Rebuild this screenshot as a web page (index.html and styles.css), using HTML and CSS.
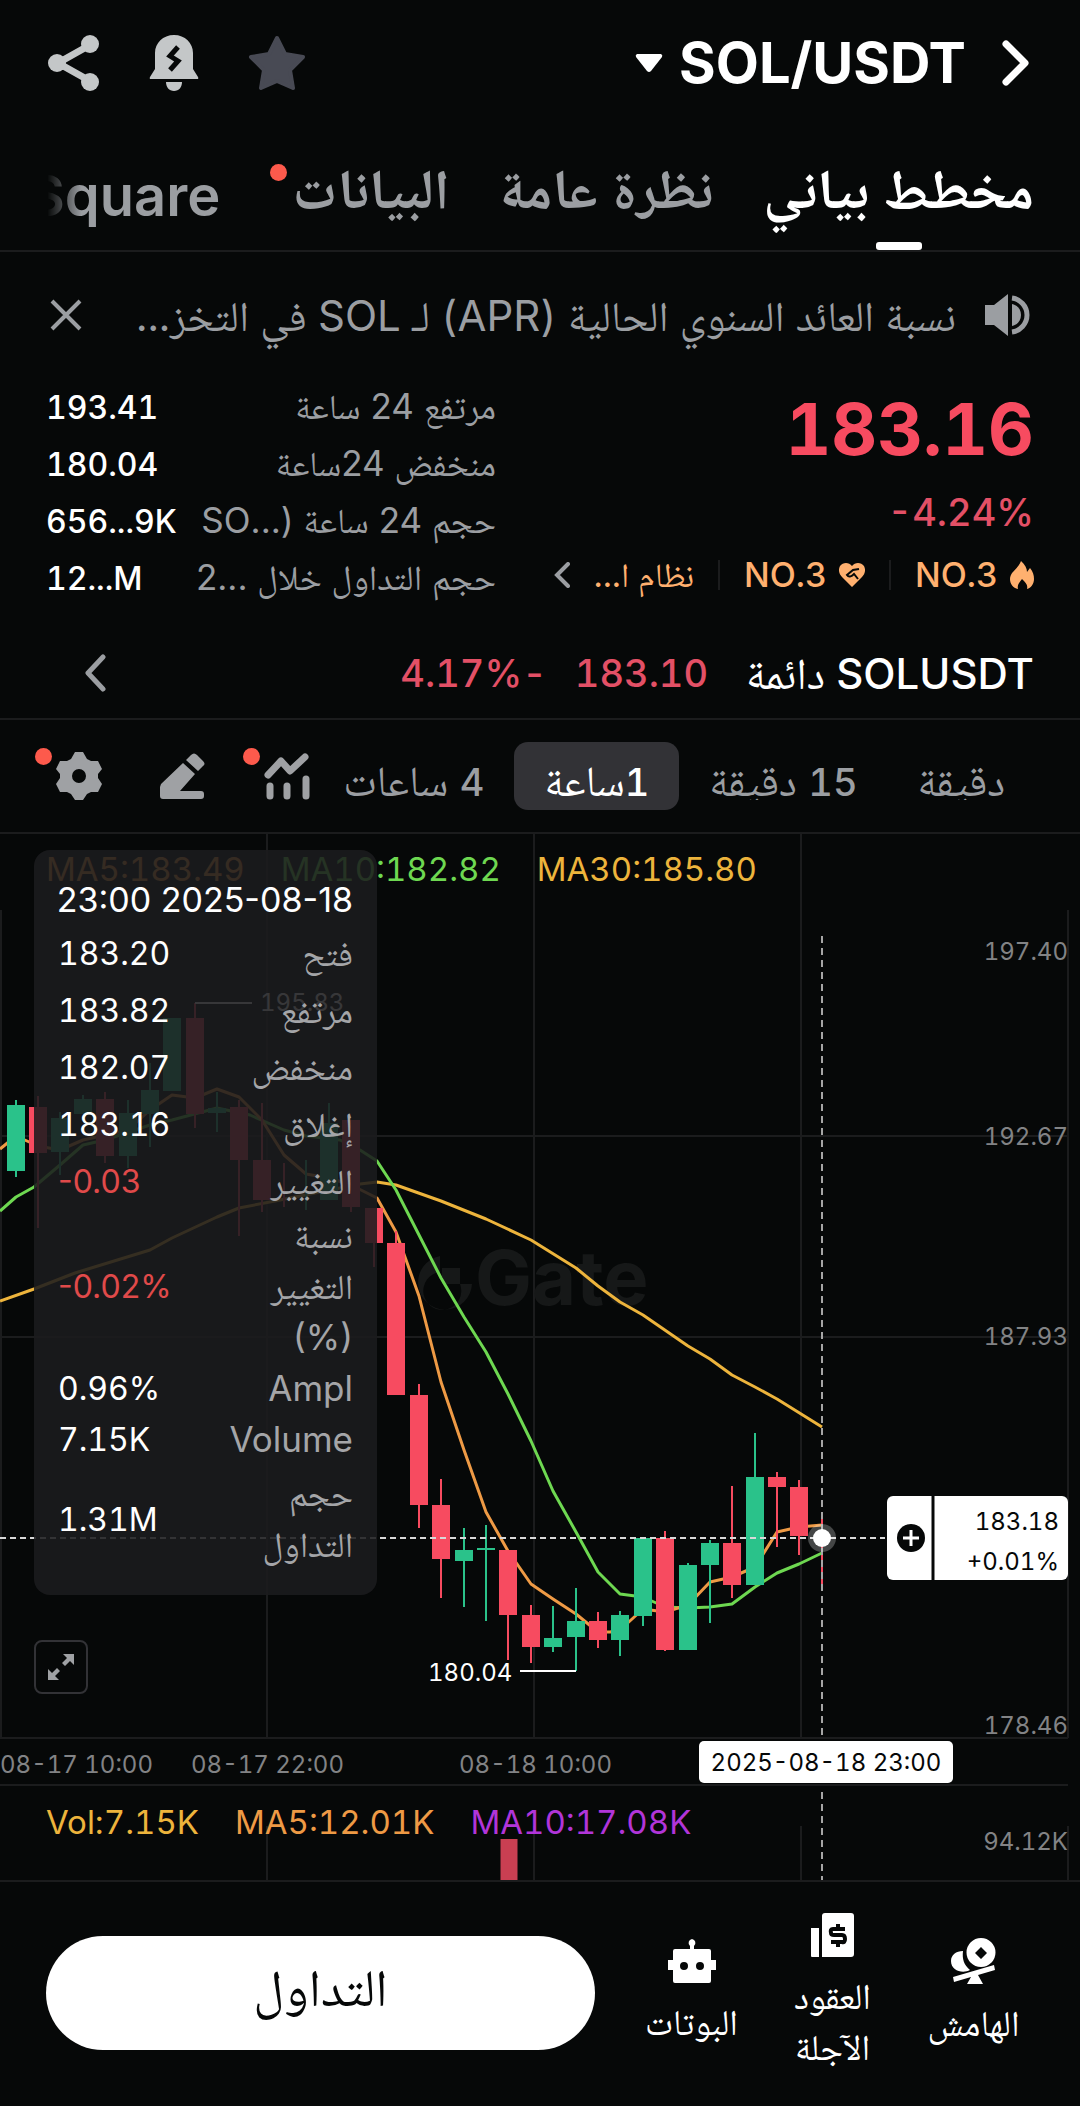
FILE: index.html
```html
<!DOCTYPE html>
<html lang="ar" dir="rtl">
<head>
    <meta charset="UTF-8">
    <meta name="viewport" content="width=device-width, initial-scale=1.0">
    <title>SOL/USDT</title>
    <link rel="stylesheet" href="styles.css">
</head>
<body>

    <header class="topbar">
        <button class="icon-btn" aria-label="رجوع">
            <svg width="28" height="46" viewBox="0 0 28 46"><path d="M4 4l19 19L4 42" fill="none" stroke="#fff" stroke-width="7" stroke-linecap="round" stroke-linejoin="round"/></svg>
        </button>
        <button class="pair">
            <span>SOL/USDT</span>
            <svg width="28" height="20" viewBox="0 0 28 20"><path d="M2 1h24q2 1 1 3L16 18q-2 2-4 0L1 4q-1-2 1-3z" fill="#fff"/></svg>
        </button>
        <div class="topbar-actions">
            <button class="icon-btn" aria-label="المفضلة">
                <svg width="58" height="56" viewBox="0 0 58 56"><path d="M29 3l8 16 18 3-13 13 3 18-16-7-16 7 3-18L3 22l18-3z" fill="#484a54" stroke="#484a54" stroke-width="4" stroke-linejoin="round"/></svg>
            </button>
            <button class="icon-btn" aria-label="تنبيه">
                <svg width="50" height="56" viewBox="0 0 50 56"><path d="M25 0c11 0 19 8 19 18v16l5 8q1 2-1 2H2q-2 0-1-2l5-8V18C6 8 14 0 25 0z" fill="#c4c7c8"/><path d="M17 47h16c0 5-3 9-8 9s-8-4-8-9z" fill="#c4c7c8"/><path d="M29 12l-8 9 8 5-8 9" fill="none" stroke="#060808" stroke-width="5"/></svg>
            </button>
            <button class="icon-btn" aria-label="مشاركة">
                <svg width="52" height="56" viewBox="0 0 52 56"><path d="M42 10L10 28l32 18" fill="none" stroke="#c4c7c8" stroke-width="7"/><g fill="#c4c7c8"><circle cx="42" cy="9" r="9"/><circle cx="9" cy="28" r="9"/><circle cx="42" cy="47" r="9"/></g></svg>
            </button>
        </div>
    </header>

    <nav class="tabs">
        <a href="#" class="tab active">مخطط بياني</a>
        <a href="#" class="tab">نظرة عامة</a>
        <a href="#" class="tab has-dot">البيانات</a>
        <a href="#" class="tab latin">Square</a>
    </nav>

    <div class="notice">
        <svg width="48" height="42" viewBox="0 0 48 42" fill="#9b9ea2"><path d="M1 11h9L24 0v42L10 31H1z"/><path d="M28 10c5 1 9 5 9 11s-4 10-9 11z"/><path d="M28 4c8 1 15 8 15 17s-7 16-15 17" fill="none" stroke="#9b9ea2" stroke-width="5"/></svg>
        <p>نسبة العائد السنوي الحالية (APR) لـ SOL في التخز...</p>
        <button class="icon-btn" aria-label="إغلاق">
            <svg width="32" height="32" viewBox="0 0 32 32"><path d="M2 2l28 28M30 2L2 30" stroke="#9b9ea2" stroke-width="4"/></svg>
        </button>
    </div>

    <section class="summary">
        <div class="quote">
            <div class="price">183.16</div>
            <div class="change" dir="ltr">-4.24%</div>
            <div class="tags">
                <a href="#" class="tag">
                    <svg width="24" height="28" viewBox="0 0 24 28"><path d="M11 0c4 4 6 7 6 11l3-4c3 4 4 7 4 11 0 5-3 9-7 10 1-4-1-6-5-10-3 4-5 6-4 10-5-1-8-5-8-10C0 11 8 8 11 0z" fill="#ffb06f"/></svg>
                    <span>NO.3</span>
                </a>
                <a href="#" class="tag">
                    <svg width="26" height="24" viewBox="0 0 26 24"><path d="M13 3c3-4 9-4 12 0 2 4 1 8-2 11l-10 10L3 14C0 11-1 7 1 3c3-4 9-4 12 0z" fill="#ffb06f"/><path d="M20 6l-6 1-6 5c2 3 5 1 7-1l4 5" fill="none" stroke="#060808" stroke-width="2"/></svg>
                    <span>NO.3</span>
                </a>
                <a href="#" class="tag tag-ar">نظام ا...</a>
                <svg width="16" height="26" viewBox="0 0 16 26"><path d="M14 2L3 13l11 11" fill="none" stroke="#9b9ea2" stroke-width="4" stroke-linecap="round"/></svg>
            </div>
        </div>
        <dl class="stats">
            <div><dt>مرتفع 24 ساعة</dt><dd>193.41</dd></div>
            <div><dt>منخفض 24ساعة</dt><dd>180.04</dd></div>
            <div><dt>حجم 24 ساعة (...SO</dt><dd>656...9K</dd></div>
            <div><dt>حجم التداول خلال ...2</dt><dd>12...M</dd></div>
        </dl>
    </section>

    <a href="#" class="perp">
        <span class="perp-name">SOLUSDT <small>دائمة</small></span>
        <span class="perp-price">183.10</span>
        <span class="perp-price">-4.17%</span>
        <svg width="22" height="38" viewBox="0 0 22 38"><path d="M19 3L4 19l15 16" fill="none" stroke="#9b9ea2" stroke-width="5" stroke-linecap="round" stroke-linejoin="round"/></svg>
    </a>

    <div class="intervals">
        <button class="interval"><span>دقيقة</span></button>
        <button class="interval"><span><b>15</b> دقيقة</span></button>
        <button class="interval active"><span><b>1</b>ساعة</span></button>
        <button class="interval"><span><b>4</b> ساعات</span></button>
        <div class="tools">
            <button class="icon-btn has-dot" aria-label="المؤشرات">
                <svg width="46" height="48" viewBox="0 0 46 48" fill="none" stroke="#9fa1a4" stroke-width="7" stroke-linecap="round" stroke-linejoin="round"><path d="M4 23L17 9l9 10L41 5"/><path d="M6 34v10M23 34v10M42 27v17"/></svg>
            </button>
            <button class="icon-btn" aria-label="رسم">
                <svg width="46" height="46" viewBox="0 0 46 46" fill="#9fa1a4"><path d="M1 31l22-21 12 11-15 17h21q3 0 3 3v2q0 3-3 3H3q-3 0-3-3V34z"/><path d="M26 7l5-5q3-3 6 0l6 6q3 3 0 5l-5 5z"/></svg>
            </button>
            <button class="icon-btn has-dot" aria-label="الإعدادات">
                <svg width="46" height="48" viewBox="0 0 46 48"><path fill-rule="evenodd" d="M19 0h8l4 7 4 2h7l4 8-4 5v4l4 6-4 8h-7l-4 2-4 6h-8l-4-6-4-2H4l-4-8 4-6v-4l-4-5 4-8h7l4-2zM23 17a7 7 0 1 0 0 14 7 7 0 0 0 0-14z" fill="#9fa1a4"/></svg>
            </button>
        </div>
    </div>

    <main class="chart">
        <svg class="plot" viewBox="0 832 1080 1048" direction="ltr">
            <!-- grid -->
            <path d="M0 833H1080M1 910V1738M267 833V1738M534 833V1738M801 833V1738M1068 910V1738M0 1136H1068M0 1337H1068M0 1738H1068M0 1785H1068M267 1826V1880M534 1826V1880M801 1826V1880M1068 1826V1880" fill="none" stroke="#1b1c1d" stroke-width="2"/>

            <!-- watermark -->
            <g fill="#161818">
                <path d="M440 1256v16a19 19 0 1 0 20 12h12a27 27 0 1 1-32-28zM442 1268h18v16h-18z"/>
                <text class="watermark" x="475" y="1305">Gate</text>
            </g>

            <!-- moving averages -->
            <g fill="none" stroke-width="3" stroke-linejoin="round">
                <path stroke="#edb43c" d="M0 1301L34 1289 75 1273 150 1250 172 1238 217 1217 239 1208 275 1201 330 1190 360 1184 377 1182 396 1185 441 1201 486 1219 531 1240 576 1268 598 1286 620 1302 643 1315 688 1346 710 1359 732 1375 755 1387 777 1399 822 1427"/>
                <path stroke="#6ed851" d="M0 1211L16 1197 34 1187 60 1165 83 1145 105 1140 150 1125 172 1120 217 1108 250 1115 284 1130 306 1136 340 1140 360 1150 377 1161 396 1190 419 1235 441 1278 464 1317 486 1352 508 1394 531 1441 553 1491 576 1532 598 1572 620 1594 643 1597 665 1607 688 1608 710 1607 732 1604 755 1587 777 1573 799 1564 822 1553"/>
                <path stroke="#ee9a45" d="M0 1149L16 1136 38 1146 60 1150 83 1140 105 1135 128 1130 150 1110 172 1095 195 1098 217 1089 239 1097 262 1120 284 1155 306 1174 329 1178 351 1185 377 1198 396 1232 419 1296 441 1382 464 1450 486 1512 508 1551 531 1584 553 1599 576 1614 598 1632 610 1632 620 1630 643 1609 665 1612 688 1605 710 1582 732 1577 755 1567 777 1532 799 1527 822 1525"/>
            </g>

            <!-- falling candles: wicks, then bodies -->
            <g fill="none" stroke="#f74b60">
                <path stroke-width="2" d="M38 1096V1228M105 1092V1163M195 1003V1128M239 1100V1236M262 1103V1212M284 1163V1207M351 1120V1212M374 1208V1267M396 1231V1395M419 1384V1528M441 1479V1598M508 1550V1660M531 1605V1663M598 1612V1648M665 1531V1651M732 1486V1598M777 1472V1547M799 1480V1555M822 1512V1585"/>
                <path stroke-width="18" d="M38 1107V1153M105 1099V1156M195 1018V1114M239 1107V1160M262 1160V1200M351 1120V1207M374 1208V1243M396 1243V1395M419 1395V1505M441 1505V1559M508 1550V1615M531 1615V1647M598 1621V1640M665 1538V1650M732 1543V1585M777 1477V1487M799 1487V1536"/>
            </g>

            <!-- rising candles -->
            <g fill="none" stroke="#2ac28a">
                <path stroke-width="2" d="M16 1100V1177M60 1112V1175M83 1095V1114M128 1100V1168M150 1063V1147M217 1092V1132M306 1160V1210M329 1103V1200M464 1528V1607M486 1525V1621M477 1549H495M553 1606V1652M576 1588V1671M620 1611V1656M643 1538V1626M688 1563V1650M710 1540V1623M755 1433V1585"/>
                <path stroke-width="18" d="M16 1105V1171M60 1118V1152M83 1099V1114M128 1113V1156M150 1090V1114M172 1018V1091M217 1108V1113M329 1123V1200M464 1550V1561M553 1638V1647M576 1621V1637M620 1615V1640M643 1538V1616M688 1565V1650M710 1543V1565M755 1477V1585"/>
            </g>
            <path d="M509 1839V1880" stroke="#c93f52" stroke-width="17"/>

            <!-- high / low marks -->
            <path d="M195 1003H252M520 1671H576" stroke="#fff" stroke-width="2"/>
            <text class="mark" x="260" y="1011">195.83</text>
            <text class="mark" x="428" y="1681">180.04</text>

            <!-- crosshair -->
            <path d="M0 1538H885" stroke="#d8d8d8" stroke-width="2" stroke-dasharray="6 4"/>
            <path d="M822 936V1738M822 1792V1880" stroke="#a6a6a6" stroke-width="2" stroke-dasharray="7 5"/>
            <circle cx="822" cy="1538" r="14" fill="#fff" fill-opacity=".25"/>
            <circle cx="822" cy="1538" r="9" fill="#fff"/>

            <!-- axes -->
            <g class="axis" text-anchor="end">
                <text x="1068" y="960">197.40</text>
                <text x="1068" y="1145">192.67</text>
                <text x="1068" y="1345">187.93</text>
                <text x="1068" y="1734">178.46</text>
                <text x="1068" y="1850">94.12K</text>
            </g>
            <g class="axis">
                <text x="0" y="1773">08-17 10:00</text>
                <text x="191" y="1773">08-17 22:00</text>
                <text x="459" y="1773">08-18 10:00</text>
            </g>

            <!-- crosshair labels -->
            <rect x="699" y="1741" width="254" height="42" rx="5" fill="#fff"/>
            <text class="cursor-text" x="826" y="1771" text-anchor="middle">2025-08-18 23:00</text>
            <rect x="887" y="1496" width="181" height="84" rx="6" fill="#fff"/>
            <path d="M933 1496V1580" stroke="#060808" stroke-width="3"/>
            <circle cx="911" cy="1538" r="14" fill="#060808"/>
            <path d="M903 1538H919M911 1530V1546" stroke="#fff" stroke-width="3"/>
            <text class="cursor-text" x="1059" y="1530" text-anchor="end">183.18</text>
            <text class="cursor-text" x="1059" y="1570" text-anchor="end">+0.01%</text>
        </svg>

        <div class="legend legend-price" dir="ltr">
            <span class="orange">MA5:183.49</span>
            <span class="green">MA10:182.82</span>
            <span class="yellow">MA30:185.80</span>
        </div>
        <div class="legend legend-vol" dir="ltr">
            <span class="yellow">Vol:7.15K</span>
            <span class="orange">MA5:12.01K</span>
            <span class="purple">MA10:17.08K</span>
        </div>

        <div class="candle-info">
            <div class="candle-date">2025-08-18 23:00</div>
            <table>
                <tr class="tall"><th>فتح</th><td>183.20</td></tr>
                <tr class="tall"><th>مرتفع</th><td>183.82</td></tr>
                <tr class="tall"><th>منخفض</th><td>182.07</td></tr>
                <tr class="tall"><th>إغلاق</th><td>183.16</td></tr>
                <tr class="tall"><th>التغيير</th><td class="down">-0.03</td></tr>
                <tr><th>نسبة<br>التغيير<br>(%)</th><td class="down">-0.02%</td></tr>
                <tr><th>Ampl</th><td>0.96%</td></tr>
                <tr><th>Volume</th><td>7.15K</td></tr>
                <tr class="tall"><th>حجم<br>التداول</th><td>1.31M</td></tr>
            </table>
        </div>

        <button class="expand" aria-label="توسيع">
            <svg width="26" height="26" viewBox="0 0 26 26"><path d="M15 0h11v11l-4-4-5 5-3-3 5-5zM11 26H0V15l4 4 5-5 3 3-5 5z" fill="#9fa1a4"/></svg>
        </button>
    </main>

    <footer class="bottombar">
        <a href="#" class="nav-item">
            <svg width="46" height="46" viewBox="0 0 46 46" fill="#fff"><path fill-rule="evenodd" d="M30 0a14 14 0 1 0 0 29 14 14 0 0 0 0-29zM30 9l6 6-6 6-6-6z"/><path d="M12 13c-1 8 1 14 7 19-7 4-19 1-19-9 0-6 5-10 12-10zM2 39l41-12 1 5-17 5 5 9H16l4-7-17 5z"/></svg>
            <span>الهامش</span>
        </a>
        <a href="#" class="nav-item">
            <svg width="44" height="44" viewBox="0 0 44 44"><path d="M0 15h8v29H1q-1 0-1-1zM11 3q0-3 3-3h26q3 0 3 3v38q0 3-3 3H11z" fill="#fff"/><path d="M34 16H22q-3 0-2 4 0 2 3 2h8q3 0 3 4t-3 3H20M27 11v5M27 29v5" fill="none" stroke="#060808" stroke-width="4"/></svg>
            <span>العقود<br>الآجلة</span>
        </a>
        <a href="#" class="nav-item">
            <svg width="48" height="44" viewBox="0 0 48 44"><path fill-rule="evenodd" d="M24 0a4 4 0 0 1 2 7v3h15q2 0 2 2v9h5v10h-5v11q0 2-2 2H7q-2 0-2-2V31H0V21h5v-9q0-2 2-2h15V7a4 4 0 0 1 2-7zM16 23a4 4 0 1 0 0 8 4 4 0 0 0 0-8zM32 23a4 4 0 1 0 0 8 4 4 0 0 0 0-8z" fill="#fff"/></svg>
            <span>البوتات</span>
        </a>
        <button class="trade">التداول</button>
    </footer>

</body>
</html>
```

FILE: styles.css
```css
* {
    box-sizing: border-box;
}

body {
    margin: 0;
    background: #060808;
    color: #fff;
    font-family: Inter, "Noto Naskh Arabic", "Noto Sans Arabic", "DejaVu Sans", sans-serif;
    font-size: 32px;
    line-height: 51px;
    font-variant-numeric: tabular-nums;
}

button {
    padding: 0;
    border: 0;
    background: none;
    color: inherit;
    font: inherit;
    font-variant-numeric: tabular-nums;
}

a {
    color: inherit;
    text-decoration: none;
}

svg {
    display: block;
    flex: none;
}

.icon-btn {
    position: relative;
}

/* Header */
.topbar {
    display: flex;
    align-items: center;
    height: 126px;
    padding: 0 50px 0 48px;
}

.pair {
    display: flex;
    align-items: center;
    gap: 16px;
    margin-right: 36px;
    font-size: 56px;
    font-weight: 700;
    line-height: 64px;
}

.topbar-actions {
    display: flex;
    gap: 49px;
    margin-right: auto;
}

/* Tabs */
.tabs {
    display: flex;
    gap: 50px;
    height: 126px;
    padding: 0 46px;
    border-bottom: 2px solid #1b1c1d;
    overflow: hidden;
    white-space: nowrap;
}

.tab {
    position: relative;
    flex: none;
    color: #9b9ea2;
    font-size: 56px;
    font-weight: 700;
    line-height: 126px;
}

.tab.latin {
    font-weight: 600;
    line-height: 140px;
    direction: ltr;
    -webkit-mask-image: linear-gradient(to right, transparent 10%, #000 28%);
    mask-image: linear-gradient(to right, transparent 10%, #000 28%);
}

.tab.active {
    color: #fff;
}

.tab.active::after {
    content: "";
    position: absolute;
    bottom: 0;
    left: 50%;
    width: 46px;
    height: 8px;
    margin-left: -23px;
    border-radius: 3px;
    background: #fff;
}

.has-dot::before {
    content: "";
    position: absolute;
    top: 38px;
    left: 0;
    width: 17px;
    height: 17px;
    border-radius: 50%;
    background: #fd5a4c;
}

.tab.has-dot {
    padding-left: 22px;
}

/* Notice */
.notice {
    display: flex;
    align-items: center;
    gap: 28px;
    height: 126px;
    padding: 0 48px 0 50px;
    color: #9b9ea2;
    font-size: 42px;
}

.notice p {
    flex: 1;
    margin: 0;
    white-space: nowrap;
}

/* Price summary */
.summary {
    display: flex;
    justify-content: space-between;
    height: 230px;
    padding: 0 46px;
}

.price {
    color: #f74b60;
    font-size: 71px;
    font-weight: 700;
    line-height: 102px;
}

.change {
    color: #e35066;
    font-size: 38px;
    font-weight: 500;
    line-height: 64px;
    text-align: right;
}

.tags {
    display: flex;
    align-items: center;
    gap: 24px;
    height: 62px;
    color: #ffb06f;
}

.tag {
    display: flex;
    align-items: center;
    gap: 12px;
    font-size: 34px;
    font-weight: 500;
    line-height: 30px;
}

.tag + .tag {
    padding-right: 24px;
    border-right: 2px solid #1b1c1d;
}

.tag-ar {
    font-weight: 400;
}

.stats {
    width: 450px;
    margin: 0;
}

.stats div {
    display: flex;
    justify-content: space-between;
    line-height: 57px;
    white-space: nowrap;
}

.stats dt {
    color: #9b9ea2;
    font-size: 35px;
    font-variant-numeric: normal;
}

.stats dd {
    margin: 0;
    padding-top: 2px;
    direction: ltr;
    font-weight: 500;
    line-height: 55px;
}

/* Perpetual row */
.perp {
    display: flex;
    align-items: center;
    gap: 28px;
    height: 112px;
    padding: 20px 46px 0 84px;
    border-bottom: 2px solid #1b1c1d;
    font-size: 42px;
    font-weight: 500;
}

.perp-name {
    margin-left: 10px;
}

.perp small {
    font-size: 44px;
    font-weight: 400;
}

.perp-price {
    color: #e35066;
    font-size: 38px;
}

.perp svg {
    margin-right: auto;
}

/* Interval bar */
.intervals {
    display: flex;
    align-items: center;
    height: 112px;
    padding: 0 45px;
    white-space: nowrap;
}

.interval {
    flex: none;
    height: 68px;
    padding: 0 30px;
    border-radius: 14px;
    color: #9b9ea2;
    font-size: 43px;
}

.interval span {
    display: block;
    height: 48px;
    line-height: 56px;
    overflow: hidden;
}

.interval b {
    font-size: 38px;
    font-weight: 500;
}

.interval.active {
    background: #323236;
    color: #fff;
}

.tools {
    display: flex;
    align-items: center;
    gap: 58px;
    margin-right: auto;
    padding-left: 11px;
}

.tools .has-dot::before {
    top: -4px;
    left: -21px;
}

/* Chart */
.chart {
    position: relative;
    border-bottom: 2px solid #1b1c1d;
}

.plot {
    width: 100%;
    height: auto;
}

.plot text {
    font-family: Inter, sans-serif;
    font-size: 24px;
}

.plot .axis {
    fill: #828385;
}

.plot .mark {
    fill: #fff;
}

.plot .cursor-text {
    fill: #060808;
}

.plot .watermark {
    font-size: 76px;
    font-weight: 700;
}

.legend {
    position: absolute;
    left: 46px;
    display: flex;
    gap: 36px;
    font-size: 33px;
}

.legend-price {
    top: 12px;
}

.legend-vol {
    bottom: 32px;
}

.orange {
    color: #ee9a45;
}

.green {
    color: #6ed851;
}

.yellow {
    color: #edb43c;
}

.purple {
    color: #b135d9;
}

.candle-info {
    position: absolute;
    top: 18px;
    left: 34px;
    width: 343px;
    padding: 24px 24px 22px;
    border-radius: 16px;
    background: rgba(27, 27, 30, 0.88);
}

.candle-date {
    font-size: 34px;
    font-variant-numeric: normal;
    white-space: nowrap;
}

.candle-info table {
    width: 100%;
    border-collapse: collapse;
}

.candle-info th,
.candle-info td {
    padding: 0;
}

.candle-info .tall th {
    padding: 3px 0;
}

.candle-info th {
    color: #a4a5a8;
    font-size: 35px;
    font-variant-numeric: normal;
    font-weight: 400;
    text-align: right;
}

.candle-info td {
    direction: ltr;
    text-align: left;
}

.candle-info .down {
    color: #e04a4a;
    font-variant-numeric: normal;
}

.expand {
    position: absolute;
    left: 34px;
    bottom: 186px;
    display: flex;
    align-items: center;
    justify-content: center;
    width: 54px;
    height: 54px;
    border: 2px solid #323236;
    border-radius: 8px;
}

/* Bottom bar */
.bottombar {
    display: flex;
    align-items: center;
    height: 224px;
    padding: 0 36px 2px 46px;
}

.nav-item {
    display: flex;
    flex-direction: column;
    align-items: center;
    width: 141px;
    font-size: 36px;
    text-align: center;
}

.nav-item svg {
    margin-bottom: 14px;
}

.trade {
    flex: 1;
    height: 114px;
    margin-right: 26px;
    padding-bottom: 12px;
    border-radius: 57px;
    background: #fff;
    color: #060808;
    font-size: 52px;
}
```
